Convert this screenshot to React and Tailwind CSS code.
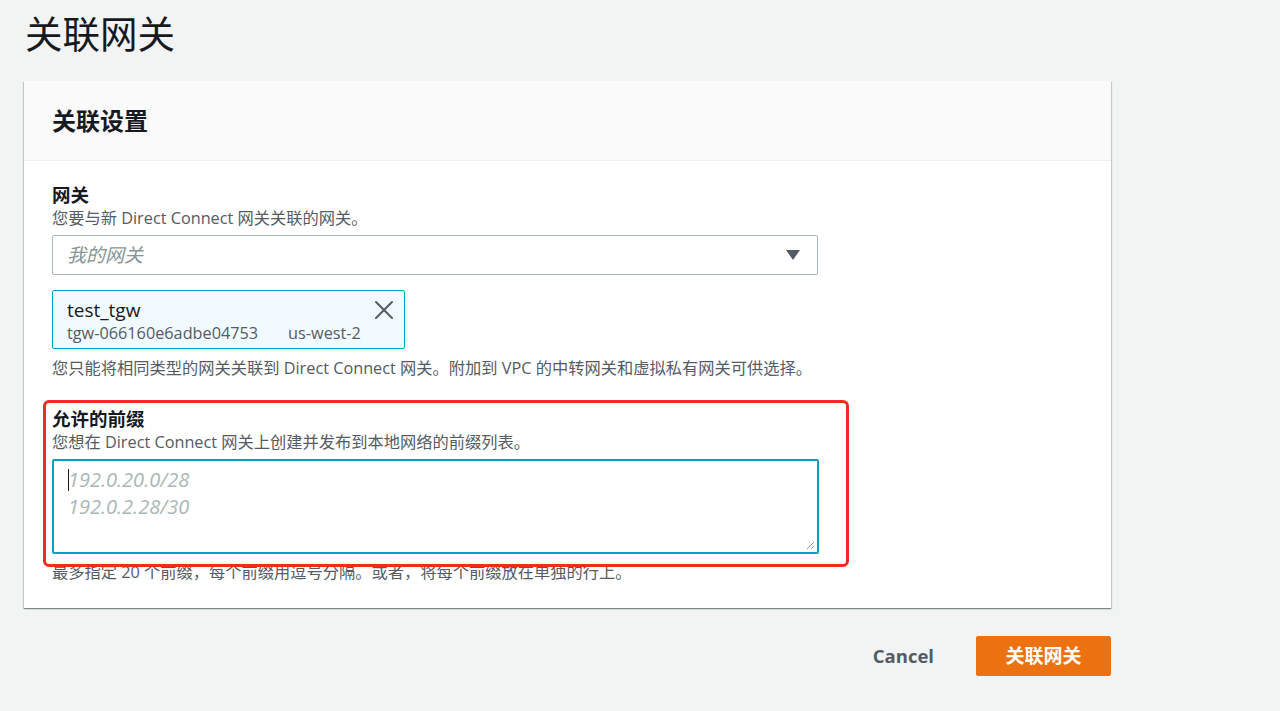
import React from 'react';

const font = { fontFamily: '"Open Sans", "Noto Sans CJK SC", sans-serif' };

const Field = ({ label, desc, children }) => (
  <div>
    <div className="text-[18.5px] font-bold leading-[24px] text-[#16191f]">{label}</div>
    <div className="text-[16.25px] leading-[22px] text-[#545b64]">{desc}</div>
    <div className="mt-[6px]">{children}</div>
  </div>
);

const App = () => {
  return (
    <div className="min-h-[711px] w-[1280px] bg-[#f2f3f3] text-[#16191f]" style={font}>
      <div className="pl-[25px] pr-[169px]">
        <h1 className="pt-[10px] text-[37.5px] font-normal leading-[48px]">关联网关</h1>

        {/* Card */}
        <div className="mt-[23px] ml-[-1px] w-[1087px] bg-white shadow-[0_1px_1px_0_rgba(0,28,36,0.3),1px_1px_1px_0_rgba(0,28,36,0.15),-1px_1px_1px_0_rgba(0,28,36,0.15)]">
          <div className="flex h-[80px] items-center border-b border-[#eaeded] bg-[#fafafa] px-[28px]">
            <h2 className="text-[24px] font-bold leading-[30px] text-[#16191f]">关联设置</h2>
          </div>

          <div className="px-[28px] pt-[22px] pb-[25px]">
            <Field label="网关" desc="您要与新 Direct Connect 网关关联的网关。">
              <div className="mt-[1px] flex h-[40px] w-[766px] items-center justify-between rounded-[2px] border border-[#aab7b8] bg-white px-[14px]">
                <span className="text-[19px] italic text-[#879596]">我的网关</span>
                <svg width="16" height="12" viewBox="0 0 16 12" className="mr-[2px]">
                  <path d="M1 1h14L8 11z" fill="#545b64" />
                </svg>
              </div>

              <div className="mt-[15px] flex h-[59px] w-[353px] items-start justify-between rounded-[2px] border border-[#00a1c9] bg-[#f1faff] pl-[14px] pr-[10px] pt-[6px]">
                <div>
                  <div className="text-[19px] leading-[26px] text-[#16191f]">test_tgw</div>
                  <div className="flex gap-[30px] text-[16.25px] leading-[20px] text-[#545b64]">
                    <span>tgw-066160e6adbe04753</span>
                    <span>us-west-2</span>
                  </div>
                </div>
                <svg width="20" height="20" viewBox="0 0 20 20" className="mt-[3px]">
                  <path d="M2 2L18 18M18 2L2 18" stroke="#545b64" strokeWidth="2" strokeLinecap="round" />
                </svg>
              </div>
              <div className="mt-[8px] text-[16.25px] leading-[22px] text-[#545b64]">
                您只能将相同类型的网关关联到 Direct Connect 网关。附加到 VPC 的中转网关和虚拟私有网关可供选择。
              </div>
            </Field>

            <div className="relative mt-[28px]">
              {/* highlight annotation */}
              <div className="pointer-events-none absolute left-[-9px] top-[-7px] h-[167px] w-[806px] rounded-[6px] border-[3px] border-[#f42a1f]" />
              <Field label="允许的前缀" desc="您想在 Direct Connect 网关上创建并发布到本地网络的前缀列表。">
                <div className="relative h-[95px] w-[767px] rounded-[2px] border-2 border-[#00a1c9] bg-white px-[14px] pt-[5px]">
                  <div className="flex">
                    <span className="mt-[3px] mr-[-1px] h-[22px] w-px bg-[#16191f]" />
                    <div className="text-[20px] italic leading-[27px] text-[#aab7b8]">
                      <div>192.0.20.0/28</div>
                      <div>192.0.2.28/30</div>
                    </div>
                  </div>
                  <svg width="10" height="10" viewBox="0 0 10 10" className="absolute right-[2px] bottom-[2px]">
                    <path d="M9 2L2 9M9 6L6 9" stroke="#879596" strokeWidth="1" />
                  </svg>
                </div>
              </Field>
              <div className="mt-[7px] text-[16.25px] leading-[22px] text-[#545b64]">
                最多指定 20 个前缀，每个前缀用逗号分隔。或者，将每个前缀放在单独的行上。
              </div>
            </div>
          </div>
        </div>

        {/* Actions */}
        <div className="mt-[28px] flex w-[1086px] items-center justify-end">
          <button className="mr-[42px] text-[18.5px] font-bold text-[#545b64]">Cancel</button>
          <button className="h-[40px] w-[135px] rounded-[2px] border border-[#ec7211] bg-[#ec7211] text-[19px] font-bold text-white">
            关联网关
          </button>
        </div>
      </div>
    </div>
  );
};

export default App;
